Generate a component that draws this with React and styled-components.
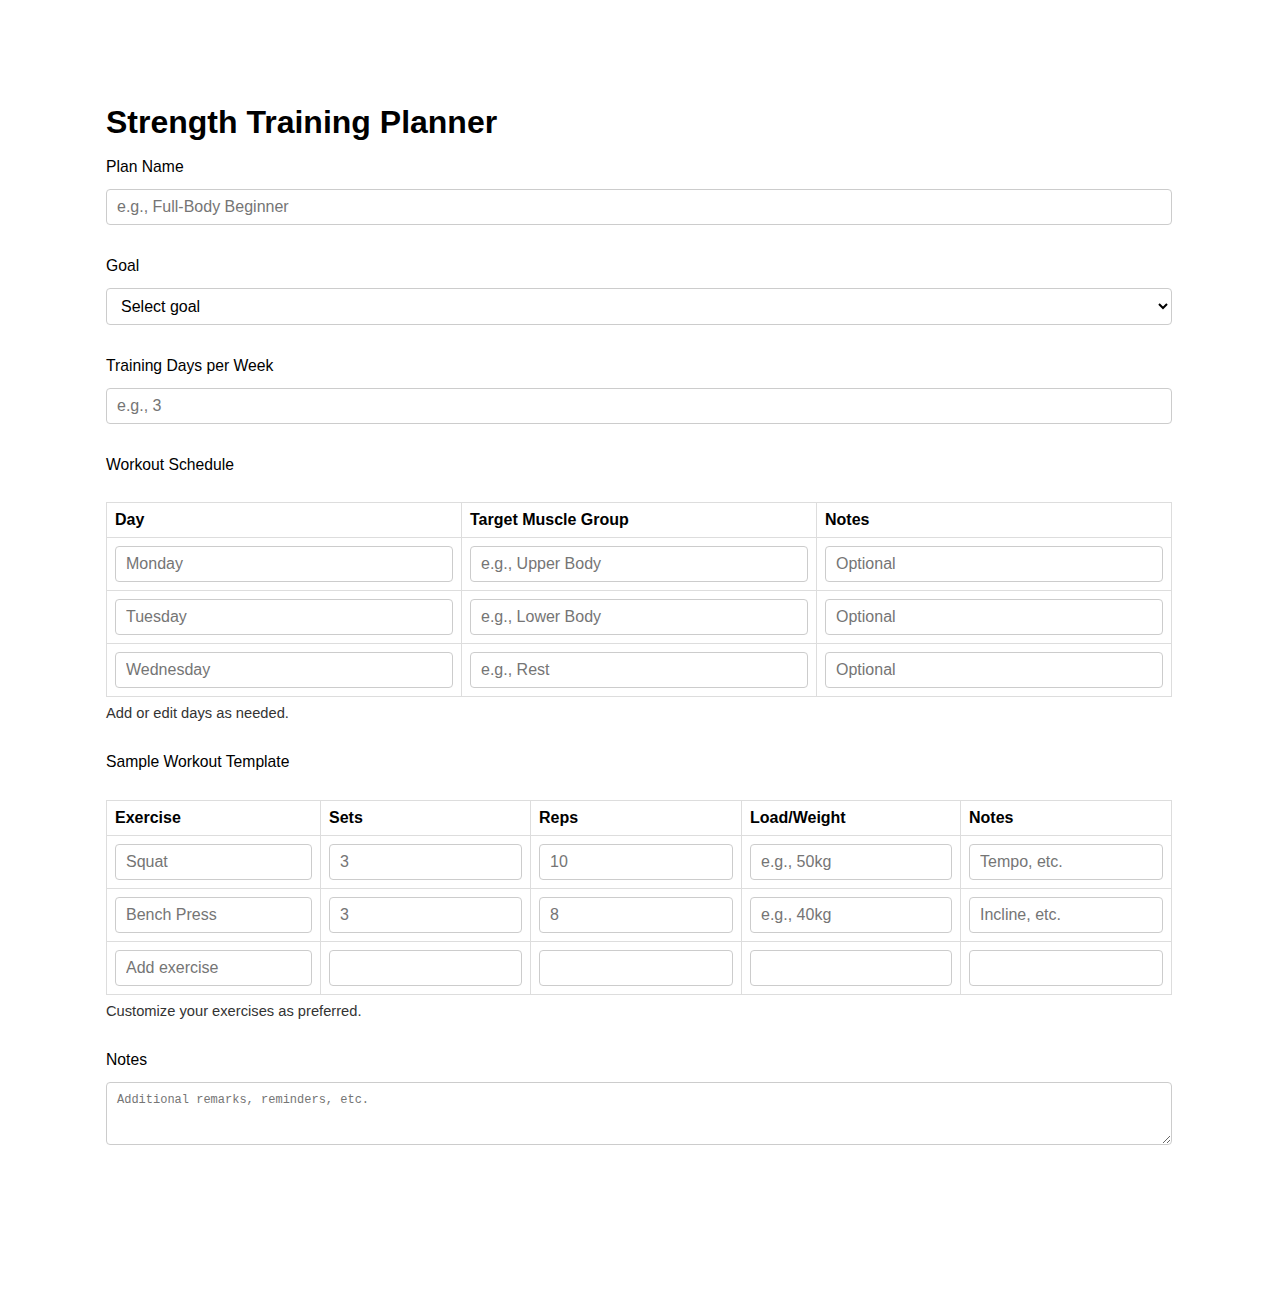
import React from "react";
import styled, { createGlobalStyle } from "styled-components";

const Global = createGlobalStyle`
  html, body { margin: 0; padding: 0; background: #fff; }
  body { font-family: "Liberation Sans", Arial, sans-serif; color: #000; }
  * { box-sizing: border-box; }
`;

const Page = styled.div`
  width: 1066px;
  margin: 0 auto;
  padding: 104px 0 120px;
`;

const Title = styled.h1`
  font-size: 32px;
  line-height: 37px;
  font-weight: 700;
  margin: 0 0 17px;
`;

const Field = styled.div`
  margin-bottom: 32px;
`;

const Label = styled.label`
  display: block;
  font-size: 15.7px;
  line-height: 18px;
  margin-bottom: ${(p) => p.$gap || 13}px;
`;

const TextInput = styled.input`
  display: block;
  width: 100%;
  height: 36px;
  padding: 8px 10px;
  font-family: "Liberation Sans", Arial, sans-serif;
  font-size: 16px;
  line-height: 18px;
  border: 1px solid #ccc;
  border-radius: 4px;
  background: #fff;
  color: #000;
  outline: none;
  &::placeholder { color: #757575; }
`;

const Select = styled.select`
  display: block;
  width: 100%;
  height: 37px;
  padding: 8px 10px;
  font-family: "Liberation Sans", Arial, sans-serif;
  font-size: 16px;
  border: 1px solid #ccc;
  border-radius: 4px;
  background: #fff;
  color: #000;
`;

const TextArea = styled.textarea`
  display: block;
  width: 100%;
  height: 63px;
  padding: 10px;
  font-family: "Liberation Mono", "DejaVu Sans Mono", monospace;
  font-size: 12px;
  border: 1px solid #ccc;
  border-radius: 4px;
  background: #fff;
  &::placeholder { color: #757575; }
`;

const Table = styled.table`
  width: 100%;
  border-collapse: collapse;
  table-layout: fixed;
`;

const Th = styled.th`
  border: 1px solid #ddd;
  padding: 8px;
  text-align: left;
  font-size: 16px;
  line-height: 18px;
  font-weight: 700;
`;

const Td = styled.td`
  border: 1px solid #ddd;
  padding: 8px;
`;

const Help = styled.div`
  margin-top: 8px;
  font-size: 14.7px;
  line-height: 16px;
  color: #333;
`;

const schedule = [
  ["Monday", "e.g., Upper Body", "Optional"],
  ["Tuesday", "e.g., Lower Body", "Optional"],
  ["Wednesday", "e.g., Rest", "Optional"],
];

const template = [
  ["Squat", "3", "10", "e.g., 50kg", "Tempo, etc."],
  ["Bench Press", "3", "8", "e.g., 40kg", "Incline, etc."],
  ["Add exercise", "", "", "", ""],
];

const templateCols = [214, 210, 211, 219, null];

export default function App() {
  return (
    <>
      <Global />
      <Page>
        <Title>Strength Training Planner</Title>

        <Field>
          <Label>Plan Name</Label>
          <TextInput placeholder="e.g., Full-Body Beginner" />
        </Field>

        <Field>
          <Label>Goal</Label>
          <Select defaultValue="">
            <option value="">Select goal</option>
            <option value="strength">Strength</option>
            <option value="hypertrophy">Hypertrophy</option>
            <option value="endurance">Endurance</option>
          </Select>
        </Field>

        <Field>
          <Label>Training Days per Week</Label>
          <TextInput placeholder="e.g., 3" />
        </Field>

        <Field>
          <Label $gap={28}>Workout Schedule</Label>
          <Table>
            <thead>
              <tr>
                <Th>Day</Th>
                <Th>Target Muscle Group</Th>
                <Th>Notes</Th>
              </tr>
            </thead>
            <tbody>
              {schedule.map((row, i) => (
                <tr key={i}>
                  {row.map((ph, j) => (
                    <Td key={j}>
                      <TextInput placeholder={ph} />
                    </Td>
                  ))}
                </tr>
              ))}
            </tbody>
          </Table>
          <Help>Add or edit days as needed.</Help>
        </Field>

        <Field>
          <Label $gap={29}>Sample Workout Template</Label>
          <Table>
            <colgroup>
              {templateCols.map((w, i) => (
                <col key={i} style={w ? { width: w } : undefined} />
              ))}
            </colgroup>
            <thead>
              <tr>
                <Th>Exercise</Th>
                <Th>Sets</Th>
                <Th>Reps</Th>
                <Th>Load/Weight</Th>
                <Th>Notes</Th>
              </tr>
            </thead>
            <tbody>
              {template.map((row, i) => (
                <tr key={i}>
                  {row.map((ph, j) => (
                    <Td key={j}>
                      <TextInput placeholder={ph} />
                    </Td>
                  ))}
                </tr>
              ))}
            </tbody>
          </Table>
          <Help>Customize your exercises as preferred.</Help>
        </Field>

        <Field>
          <Label $gap={13}>Notes</Label>
          <TextArea placeholder="Additional remarks, reminders, etc." />
        </Field>
      </Page>
    </>
  );
}
